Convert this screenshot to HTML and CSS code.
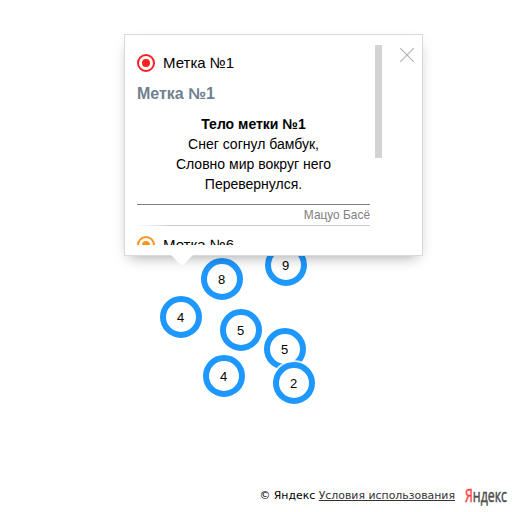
FILE: index.html
```
<!DOCTYPE html>
<html lang="ru">
<head>
<meta charset="utf-8">
<title>Карта</title>
<link rel="stylesheet" href="styles.css">
</head>
<body>
<main class="map">
  <div class="cluster c1">8</div>
  <div class="cluster c2">9</div>
  <div class="cluster c3">4</div>
  <div class="cluster c4">5</div>
  <div class="cluster c5">5</div>
  <div class="cluster c6">4</div>
  <div class="cluster c7">2</div>

  <section class="balloon">
    <div class="content">
      <div class="item">
        <svg class="icon red" width="18" height="18" viewBox="0 0 18 18"><circle class="ring" cx="9" cy="9" r="8"/><circle class="dot" cx="9" cy="9" r="4"/></svg>
        <span>Метка №1</span>
      </div>
      <h2>Метка №1</h2>
      <div class="poem"><b>Тело метки №1</b><br>Снег согнул бамбук,<br>Словно мир вокруг него<br>Перевернулся.</div>
      <div class="author">Мацуо Басё</div>
      <div class="divider"></div>
      <div class="item next">
        <svg class="icon orange" width="18" height="18" viewBox="0 0 18 18"><circle class="ring" cx="9" cy="9" r="8"/><circle class="dot" cx="9" cy="9" r="4"/></svg>
        <span>Метка №6</span>
      </div>
    </div>
    <div class="scrollbar"></div>
    <svg class="close" width="14" height="14" viewBox="0 0 14 14"><path d="M0 0L14 14M14 0L0 14"/></svg>
    <div class="tail"></div>
  </section>

  <footer class="copyright">
    <span class="terms">© Яндекс <a>Условия использования</a></span>
    <div class="logo"><span class="ya">Я</span>ндекс</div>
  </footer>
</main>
</body>
</html>
```
FILE: styles.css
```
body {
  margin: 0;
  font-family: "Liberation Sans", Arial, sans-serif;
  color: #000;
  background: #fff;
}
.map {
  position: relative;
  width: 512px;
  height: 512px;
  overflow: hidden;
  display: flex;
  flex-direction: column;
  justify-content: flex-end;
}
.cluster {
  position: absolute;
  box-sizing: border-box;
  width: 42px;
  height: 42px;
  padding-right: 1px;
  border: 6px solid #1e98ff;
  border-radius: 50%;
  background: #fff;
  box-shadow: 0 0 0 2px rgba(255, 255, 255, .8);
  font-size: 13px;
  line-height: 31px;
  text-align: center;
}
.c1 { left: 201px; top: 258px; }
.c2 { left: 265px; top: 244px; }
.c3 { left: 160px; top: 296px; }
.c4 { left: 220px; top: 309px; }
.c5 { left: 264px; top: 328px; }
.c6 { left: 203px; top: 355px; }
.c7 { left: 273px; top: 362px; }

.balloon {
  position: absolute;
  left: 124px;
  top: 34px;
  box-sizing: border-box;
  width: 299px;
  height: 222px;
  padding: 10px 8px 10px 12px;
  border: 1px solid #d9d9d9;
  background: #fff;
  box-shadow: 0 6px 14px -6px rgba(0, 0, 0, .4);
  display: flex;
  align-items: flex-start;
}
.content {
  width: 233px;
  height: 200px;
  overflow: hidden;
}
.item {
  display: flex;
  align-items: center;
  gap: 8px;
  height: 18px;
  margin-top: 9px;
  font-size: 15px;
}
.item span { padding-bottom: 2px; }
.icon { flex: none; }
.ring { fill: #fff; stroke-width: 2; }
.red .ring { stroke: #ff1f1f; }
.red .dot { fill: #ff1f1f; }
.orange .ring { stroke: #ff931e; }
.orange .dot { fill: #ff931e; }
h2 {
  margin: 12px 0 0;
  font-size: 16px;
  line-height: 20px;
  color: #708090;
}
.poem {
  margin-top: 10px;
  font-size: 14px;
  line-height: 20px;
  text-align: center;
}
.author {
  height: 20px;
  margin-top: 10px;
  border-top: 1px solid #808080;
  font-size: 11.9px;
  line-height: 20px;
  color: #808080;
  text-align: right;
}
.divider {
  height: 1px;
  background: linear-gradient(to right, #fff, #ccc 15%);
}
.next { margin-top: 10px; }
.scrollbar {
  width: 7px;
  height: 113px;
  margin-left: 5px;
  background: #d3d3d3;
}
.close {
  margin: 3px 0 0 18px;
  fill: none;
  stroke: #b3b3b3;
  stroke-width: 1.2;
}
.tail {
  position: absolute;
  left: 46px;
  top: 220px;
  width: 22px;
  height: 11px;
  background: #fff;
  clip-path: polygon(0 0, 100% 0, 50% 100%);
}
.copyright {
  display: flex;
  align-items: center;
  justify-content: flex-end;
  height: 26px;
  padding: 0 57px 3px 0;
}
.terms {
  font: 10.9px/14px "DejaVu Sans", sans-serif;
  white-space: nowrap;
}
.terms a {
  color: #333;
  text-decoration: underline;
}
.logo {
  position: absolute;
  left: 465px;
  top: 482px;
  font: 19px/27px "Open Sans", sans-serif;
  color: #4d4d4d;
  white-space: nowrap;
  -webkit-text-stroke: .5px;
  transform: scaleX(.65);
  transform-origin: left;
}
.ya { color: #ff3d3d; }
```
